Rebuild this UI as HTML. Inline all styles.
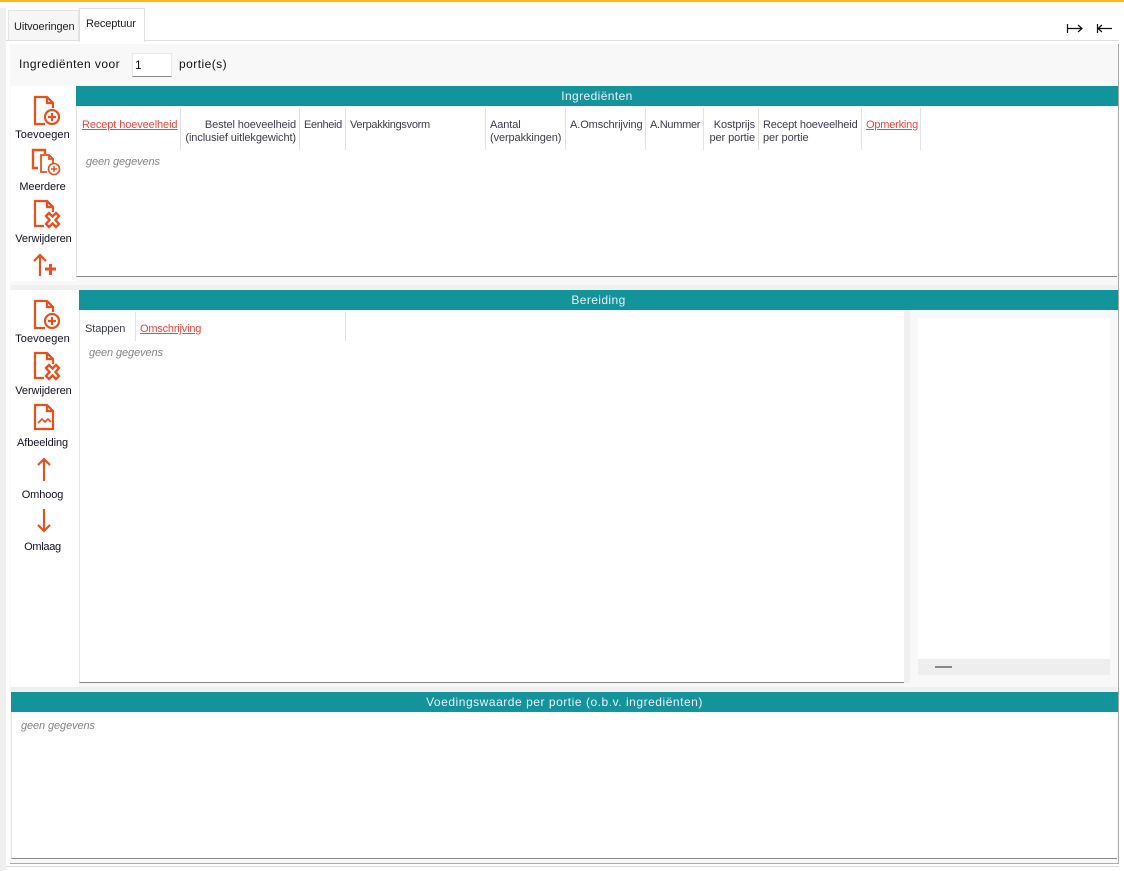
<!DOCTYPE html>
<html><head><meta charset="utf-8">
<style>
html,body{margin:0;padding:0;background:#fff;}
body{width:1124px;height:871px;position:relative;overflow:hidden;font-family:"Liberation Sans",sans-serif;font-size:11px;color:#3c3c50;}
.b{position:absolute;}
.t{position:absolute;white-space:nowrap;line-height:13px;letter-spacing:-.1px;margin-top:1px;}
.r{text-align:right;}
.l{color:#f0443a;text-decoration:underline;text-decoration-color:#e8501f;}
.lab{position:absolute;left:2px;width:81px;text-align:center;color:#111122;line-height:13px;letter-spacing:-.1px;margin-top:1px;}
.hd{position:absolute;background:#13939a;color:#eef;text-align:center;font-size:12px;line-height:20px;height:20px;letter-spacing:.4px;}
.sep{position:absolute;width:1px;background:#e2e2e2;}
.g{position:absolute;font-style:italic;color:#858585;line-height:13px;letter-spacing:-.1px;margin-top:1px;}
</style></head>
<body>
<div class="b" style="left:0;top:0;width:1124px;height:2px;background:#fdb813"></div>
<div class="b" style="left:0;top:8px;width:6px;height:863px;background:#efefef"></div>
<!-- tabs -->
<div class="b" style="left:8px;top:10px;width:71px;height:30px;background:#f6f6f6;border:1px solid #e4e4e4;border-bottom:0;box-sizing:border-box"></div>
<div class="t" style="left:14px;top:20px;color:#222">Uitvoeringen</div>
<!-- outer panel -->
<div class="b" style="left:6px;top:40px;width:1113px;height:825px;background:#fff;border-top:1px solid #dedede;border-bottom:1px solid #dcdcdc"></div>
<div class="b" style="left:79px;top:8px;width:66px;height:34px;background:#fff;border:1px solid #e0e0e0;border-bottom:0;box-sizing:border-box"></div>
<div class="t" style="left:86px;top:17px;color:#222">Receptuur</div>
<!-- main bg -->
<div class="b" style="left:10px;top:44px;width:1108px;height:819px;background:#f8f8f8"></div>
<div class="b" style="left:1118px;top:44px;width:1px;height:819px;background:#a8a8a8"></div>
<div class="b" style="left:10px;top:863px;width:1109px;height:1px;background:#aaa"></div>

<div class="t" style="left:19px;top:57px;font-size:12px;color:#111;letter-spacing:.45px">Ingrediënten voor</div>
<div class="b" style="left:132px;top:53px;width:40px;height:24px;box-sizing:border-box;background:#fff;border:1px solid #e8e8e8;border-bottom:1px solid #888"></div>
<div class="t" style="left:135px;top:58px;font-size:12px;color:#111">1</div>
<div class="t" style="left:179px;top:57px;font-size:12px;color:#111;letter-spacing:.45px">portie(s)</div>

<!-- Ingredienten -->
<div class="b" style="left:11px;top:86px;width:65px;height:195px;background:#fff"></div>
<div class="hd" style="left:76px;top:86px;width:1042px">Ingrediënten</div>
<div class="b" style="left:76px;top:106px;width:1041px;height:171px;background:#fff;border-left:1px solid #e4e4e4;border-bottom:1px solid #888;box-sizing:border-box"></div>
<div class="sep" style="left:180px;top:108px;height:42px"></div>
<div class="sep" style="left:299px;top:108px;height:42px"></div>
<div class="sep" style="left:345px;top:108px;height:42px"></div>
<div class="sep" style="left:485px;top:108px;height:42px"></div>
<div class="sep" style="left:565px;top:108px;height:42px"></div>
<div class="sep" style="left:645px;top:108px;height:42px"></div>
<div class="sep" style="left:703px;top:108px;height:42px"></div>
<div class="sep" style="left:758px;top:108px;height:42px"></div>
<div class="sep" style="left:861px;top:108px;height:42px"></div>
<div class="sep" style="left:920px;top:108px;height:42px"></div>

<div class="t l" style="left:82px;top:118px">Recept hoeveelheid</div>
<div class="t r" style="right:828px;top:118px">Bestel hoeveelheid</div>
<div class="t r" style="right:828px;top:131px">(inclusief uitlekgewicht)</div>
<div class="t" style="left:304px;top:118px;letter-spacing:-.35px">Eenheid</div>
<div class="t" style="left:350px;top:118px;letter-spacing:-.3px">Verpakkingsvorm</div>
<div class="t" style="left:490px;top:118px">Aantal</div>
<div class="t" style="left:490px;top:131px">(verpakkingen)</div>
<div class="t" style="left:570px;top:118px">A.Omschrijving</div>
<div class="t" style="left:650px;top:118px;letter-spacing:-.3px">A.Nummer</div>
<div class="t r" style="right:369px;top:118px">Kostprijs</div>
<div class="t r" style="right:369px;top:131px">per portie</div>
<div class="t" style="left:763px;top:118px;letter-spacing:-.15px">Recept hoeveelheid</div>
<div class="t" style="left:763px;top:131px">per portie</div>
<div class="t l" style="left:866px;top:118px;letter-spacing:-.2px">Opmerking</div>
<div class="g" style="left:86px;top:155px">geen gegevens</div>

<div class="lab" style="top:128px;letter-spacing:.1px">Toevoegen</div>
<div class="lab" style="top:180px">Meerdere</div>
<div class="lab" style="top:232px;left:3px">Verwijderen</div>

<!-- separator -->
<div class="b" style="left:11px;top:285px;width:1107px;height:5px;background:#f0f0f0"></div>

<!-- Bereiding -->
<div class="b" style="left:11px;top:290px;width:68px;height:397px;background:#fff"></div>
<div class="hd" style="left:79px;top:290px;width:1039px">Bereiding</div>
<div class="b" style="left:79px;top:310px;width:825px;height:373px;background:#fff;border-left:1px solid #e4e4e4;border-bottom:1px solid #888;box-sizing:border-box"></div>
<div class="b" style="left:904px;top:310px;width:6px;height:373px;background:#f0f0f0"></div>
<div class="sep" style="left:135px;top:312px;height:29px"></div>
<div class="sep" style="left:345px;top:312px;height:29px"></div>
<div class="t" style="left:85px;top:322px">Stappen</div>
<div class="t l" style="left:140px;top:322px;letter-spacing:-.2px">Omschrijving</div>
<div class="g" style="left:89px;top:346px">geen gegevens</div>
<div class="b" style="left:918px;top:318px;width:192px;height:341px;background:#fff"></div>
<div class="b" style="left:918px;top:659px;width:192px;height:16px;background:#eee"></div>
<div class="b" style="left:935px;top:666px;width:17px;height:2px;background:#888"></div>

<div class="lab" style="top:332px;letter-spacing:.1px">Toevoegen</div>
<div class="lab" style="top:384px;left:3px">Verwijderen</div>
<div class="lab" style="top:436px">Afbeelding</div>
<div class="lab" style="top:488px">Omhoog</div>
<div class="lab" style="top:540px;letter-spacing:-.3px">Omlaag</div>

<!-- Voedingswaarde -->
<div class="b" style="left:11px;top:687px;width:1107px;height:5px;background:#f0f0f0"></div>
<div class="hd" style="left:11px;top:692px;width:1107px;letter-spacing:.53px">Voedingswaarde per portie (o.b.v. ingrediënten)</div>
<div class="b" style="left:11px;top:712px;width:1106px;height:147px;background:#fff;border-left:1px solid #e4e4e4;border-bottom:1px solid #888;box-sizing:border-box"></div>
<div class="g" style="left:21px;top:719px">geen gegevens</div>

<svg class="b" style="left:0;top:0" width="1124" height="871" viewBox="0 0 1124 871" fill="none" stroke="#e8501f" stroke-width="2.2">
<!-- Toevoegen 1 -->
<path d="M45 124H35V97H47L53 103V108M47 97V103H53"/>
<circle cx="52" cy="117" r="7" fill="#fff"/>
<path d="M48 117H56M52 113V121"/>
<!-- Meerdere -->
<path d="M38 168H33V150H45V154" stroke-width="2.400"/>
<path d="M47 172H41V155H49L53 159V163M49 155V159H53" stroke-width="1.800"/>
<circle cx="54" cy="169" r="5.500" fill="#fff" stroke-width="1.600"/>
<path d="M51 169H57M54 166V172" stroke-width="1.500"/>
<!-- Verwijderen 1 -->
<path d="M44 226H35V201H47L53 207V212M47 201V207H53"/>
<path fill="#fff" stroke-width="2.400" d="M46 216L49 213L52.500 216.500L56 213L59 216L55.500 220L59 224L56 227L52.500 223.500L49 227L46 224L49.500 220Z"/>
<!-- Arrow plus -->
<path d="M40 276V255M34 261L40 255L46 261" stroke-width="2.200"/>
<path d="M45 269H56M50.500 264V275" stroke-width="3"/>
<!-- Toevoegen 2 -->
<path d="M45 328H35V301H47L53 307V312M47 301V307H53"/>
<circle cx="52" cy="321" r="7" fill="#fff"/>
<path d="M48 321H56M52 317V325"/>
<!-- Verwijderen 2 -->
<path d="M44 378H35V353H47L53 359V364M47 353V359H53"/>
<path fill="#fff" stroke-width="2.400" d="M46 368L49 365L52.500 368.500L56 365L59 368L55.500 372L59 376L56 379L52.500 375.500L49 379L46 376L49.500 372Z"/>
<!-- Afbeelding -->
<path d="M35 429V405H47L53 411V429ZM47 405V411H53"/>
<path d="M38 423L42 419L45 422L48 419L51 422" stroke-width="1.600"/>
<!-- Omhoog / Omlaag -->
<path d="M44 481V459M38 465L44 459L50 465" stroke-width="2.200"/>
<path d="M44 509V531M38 525L44 531L50 525" stroke-width="2.200"/>
<!-- top right arrows -->
<g stroke="#111" stroke-width="1.200">
<path d="M1067.500 24V33M1068 28.500H1082M1078 25L1082 28.500L1078 32"/>
<path d="M1097.500 24V33M1098 28.500H1112M1102 25L1098 28.500L1102 32"/>
</g>
</svg>
</body></html>
